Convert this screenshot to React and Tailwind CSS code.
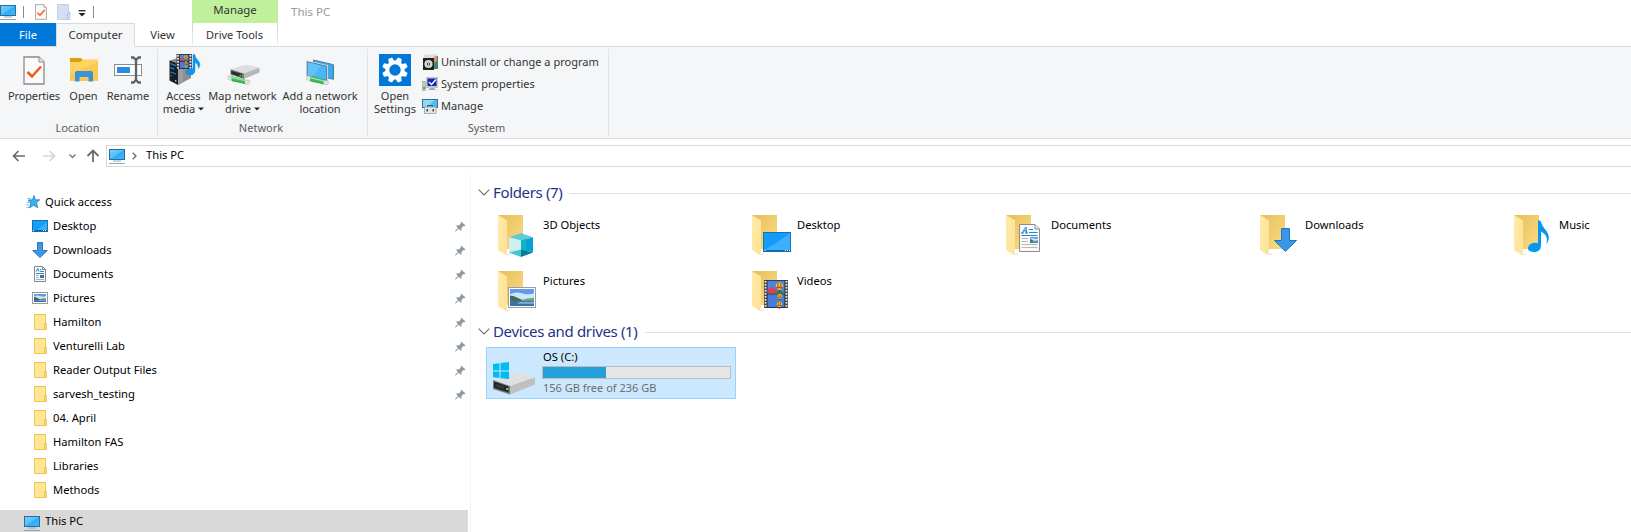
import React from "react";

function Monitor({ className = "" }) {
  return (
    <svg width="16" height="16" viewBox="0 0 16 16" className={"shrink-0 " + className}>
      <defs>
        <linearGradient id="mon" x1="0" y1="0" x2="1" y2="1">
          <stop offset="0" stopColor="#7fd0fb" />
          <stop offset="0.5" stopColor="#52bdfb" />
          <stop offset="0.52" stopColor="#2fabf8" />
          <stop offset="1" stopColor="#42b8fa" />
        </linearGradient>
      </defs>
      <rect x="0.5" y="1.5" width="15" height="10" fill="url(#mon)" stroke="#2c6f96" />
      <rect x="4" y="12.5" width="8" height="1" fill="#8fa9b8" />
      <rect x="0" y="15" width="16" height="1" fill="#93a7b4" />
    </svg>
  );
}

function CheckPage({ w, h }) {
  return (
    <svg width={w} height={h} viewBox="0 0 22 29" className="shrink-0">
      <path d="M1 1H16L21 6V28H1Z" fill="#fafafa" stroke="#8b8b8b" strokeWidth="1.3" />
      <path d="M16 1V6H21" fill="#e6e6e6" stroke="#8b8b8b" />
      <path d="M4.500 16L9 20.500L18 10.500" fill="none" stroke="#f0581c" strokeWidth="2.500" />
    </svg>
  );
}

function OpenFolder() {
  return (
    <svg width="32" height="32" viewBox="0 0 32 32">
      <path d="M2 4H13L15 6V10H2Z" fill="#dd9d10" />
      <path d="M2 8H12L15 5.500H30V27H2Z" fill="#ffd264" />
      <path d="M2 20L30 8V27H2Z" fill="#fcc850" />
      <path d="M7 27.500V18.500Q7 17 8.500 17H23.500Q25 17 25 18.500V27.500H20.500V23H11.500V27.500Z" fill="#3a94dc" />
    </svg>
  );
}

function RenameIcon() {
  return (
    <svg width="32" height="32" viewBox="0 0 32 32">
      <rect x="2.500" y="10.500" width="27" height="11" fill="#fff" stroke="#8a8d90" />
      <rect x="5" y="13" width="13" height="6" fill="#2b8be0" />
      <path d="M19 3.500H21.500L24 6L26.500 3.500H29M19 28.500H21.500L24 26L26.500 28.500H29M24 5V27" stroke="#5e6266" strokeWidth="2.300" fill="none" />
    </svg>
  );
}

function Balloon({ cx, cy, r }) {
  return (
    <g>
      <path d={`M${cx - r} ${cy}Q${cx - r} ${cy - r} ${cx} ${cy - r}T${cx + r} ${cy}Q${cx + r * 0.8} ${cy + r * 0.7} ${cx} ${cy + r * 1.3}Q${cx - r * 0.8} ${cy + r * 0.7} ${cx - r} ${cy}Z`} fill="#f3c81d" />
      <path d={`M${cx - r * 0.4} ${cy - r * 0.8}v${r * 1.5}M${cx + r * 0.4} ${cy - r * 0.8}v${r * 1.5}`} stroke="#6b2a1c" strokeWidth={r * 0.22} />
      <path d={`M${cx - r * 0.8} ${cy + r * 0.4}h${r * 1.6}`} stroke="#d33a2c" strokeWidth={r * 0.3} />
      <rect x={cx - r * 0.25} y={cy + r * 1.2} width={r * 0.5} height={r * 0.4} fill="#3b2618" />
    </g>
  );
}

function Film({ x, y, w, h }) {
  const holes = Array.from({ length: Math.floor(h / 3) }, (_, i) => y + 1 + i * 3);
  const half = (h - 1) / 2;
  const iw = w - 7;
  const ix = x + 3.5;
  return (
    <g>
      <rect x={x} y={y} width={w} height={h} fill="#4a4a4c" />
      {holes.map((hy) => (
        <g key={hy} fill="#f2f2f2">
          <rect x={x + 0.7} y={hy} width="1.7" height="1.6" />
          <rect x={x + w - 2.4} y={hy} width="1.7" height="1.6" />
        </g>
      ))}
      <rect x={x + 3} y={y} width={w - 6} height={h} fill="#202124" />
      <rect x={ix} y={y + 0.7} width={iw} height={half - 0.7} fill="#4d84e0" />
      <rect x={ix} y={y + half + 0.8} width={iw} height={half - 0.6} fill="#477bd8" />
      <path d={`M${ix} ${y + half}v${-half * 0.3}l${iw * 0.25} ${-half * 0.2}l${iw * 0.3} ${half * 0.2}v${half * 0.3}z`} fill="#dd4059" />
      <path d={`M${ix + iw * 0.45} ${y + half}v${-half * 0.15}h${iw * 0.55}v${half * 0.15}z`} fill="#2e8b46" />
      <Balloon cx={ix + iw * 0.7} cy={y + half * 0.45} r={half * 0.27} />
      <Balloon cx={ix + iw * 0.72} cy={y + half * 1.2} r={half * 0.18} />
      <Balloon cx={ix + iw * 0.7} cy={y + half * 1.8} r={half * 0.2} />
    </g>
  );
}

function AccessMedia() {
  return (
    <svg width="34" height="32" viewBox="0 0 34 32">
      <path d="M2.500 6.500L11 4L24 7L11 9.500Z" fill="#8b8e90" />
      <path d="M2.500 6.500L11 9.500V31L2.500 26.500Z" fill="#1b1e22" />
      <path d="M11 9.500L24 7V24L11 31Z" fill="#8b8e93" />
      <path d="M11 9.500L16 8.500V28.500L11 31Z" fill="#9b9ea2" />
      <g fill="#1391e8">
        <path d="M3.500 9l5.500 2v1.300l-5.500-2zM3.500 13l3.500 1.300v1.300l-3.500-1.300zM3.500 17.500l5.500 2v1l-5.500-2z" />
        <rect x="3.500" y="21" width="1.300" height="1.300" />
        <rect x="8" y="26" width="1.400" height="1.600" fill="#6bc9ff" />
      </g>
      <Film x={9.5} y={0} w={15.5} h={15} />
      <path d="M26 0.500H27.800Q28.300 4 31 6.500Q34.500 10 31.500 14.500Q31.500 10 28 8.500V16.500Q27.500 21 23 21Q18.800 20.500 19 17.800Q20 14.200 26 14.500Z" fill="#0b98f2" stroke="#087ccb" strokeWidth="0.400" />
    </svg>
  );
}

function NetPipe() {
  return (
    <g>
      <path d="M2 21.500L6.500 22V26.500L2 25.500Z" fill="#dfe4e2" stroke="#b4bab8" strokeWidth=".5" />
      <path d="M17.500 26L23.500 26.500Q25 29 22.500 30.500L17.500 29.500Z" fill="#dfe4e2" stroke="#a9afad" strokeWidth=".5" />
      <path d="M5.500 22L19 25.500V29.500L5.500 26.800Z" fill="#3cc055" />
      <path d="M5.500 22.500L19 26V27.300L5.500 24Z" fill="#90e69a" />
      <path d="M6 26.800L19 29.500" stroke="#1f8a38" strokeWidth=".7" />
    </g>
  );
}

function MapDrive() {
  return (
    <svg width="34" height="32" viewBox="0 0 34 32">
      <NetPipe />
      <path d="M4.500 15.300L19.500 10.800L33.500 13.500L18 19.500Z" fill="#dcdddf" />
      <path d="M4.500 15.300L18 19.500V25L4.500 20.500Z" fill="#77797b" />
      <path d="M18 19.500L33.500 13.500V18.500L18 25Z" fill="#b5b7b9" />
      <path d="M5.300 16.700L16 20V23.500L5.300 20Z" fill="#2a2c2e" />
      <rect x="13.500" y="21" width="1.800" height="1.300" fill="#5bea63" />
    </svg>
  );
}

function AddLocation() {
  return (
    <svg width="32" height="32" viewBox="0 0 32 32">
      <path d="M9.500 6L29.500 10.700V25.300L9.500 20.500Z" fill="#3aa9ee" stroke="#4a6f86" strokeWidth="0.900" />
      <path d="M3 7.500L23 12V27L3 21.500Z" fill="#44b3f6" stroke="#dfe9ee" strokeWidth="2" />
      <path d="M3.200 7.700L22.700 12.200V26.700L3.200 21.300Z" fill="#49b5f6" stroke="#45657a" strokeWidth="0.800" />
      <path d="M3.700 8.300L17 11.500L9 22.500L3.700 21Z" fill="#72c8fa" opacity=".65" />
      <g transform="translate(0.500 0.300)"><NetPipe /></g>
    </svg>
  );
}

function SettingsIcon() {
  return (
    <svg width="32" height="32" viewBox="0 0 32 32">
      <rect width="32" height="32" fill="#0078d7" />
      <g transform="translate(16 16) rotate(22.500)">
        <circle r="7.600" fill="none" stroke="#fff" strokeWidth="3.800" />
        {[0, 45, 90, 135, 180, 225, 270, 315].map((a) => (
          <path key={a} transform={`rotate(${a})`} d="M-3 -8.500L-2 -12.800H2L3 -8.500Z" fill="#fff" />
        ))}
      </g>
    </svg>
  );
}

function UninstallIcon() {
  return (
    <svg width="16" height="16" viewBox="0 0 16 16">
      <path d="M2 1L15 0V5H2Z" fill="#dcdedc" />
      <path d="M12 3L16 2V15H12Z" fill="#3f8a68" />
      <path d="M12 3L15 2V7L12 9Z" fill="#df9363" />
      <path d="M1 4H12V16H1Z" fill="#202120" />
      <circle cx="6.500" cy="10" r="4.100" fill="#d3d6d3" />
      <circle cx="6.500" cy="10" r="1.500" fill="#3a3c3a" />
      <circle cx="6.500" cy="10" r=".7" fill="#fff" />
    </svg>
  );
}

function SysPropsIcon() {
  return (
    <svg width="16" height="16" viewBox="0 0 16 16">
      <rect x="0.500" y="5.500" width="3" height="9" fill="#c6c9c6" stroke="#949894" strokeWidth=".6" />
      <rect x="1" y="11" width="2" height="2" fill="#2fc440" />
      <path d="M4 1H16V12H4Z" fill="#c4c7c7" />
      <rect x="5.500" y="2.500" width="9" height="7.500" fill="#1425b4" />
      <path d="M7 6L9.500 8.500L14 3.500" stroke="#fff" strokeWidth="1.400" fill="none" />
      <path d="M8 12H12L14 14H6Z" fill="#a8abab" />
    </svg>
  );
}

function ManageIcon() {
  return (
    <svg width="16" height="16" viewBox="0 0 16 16">
      <rect x="0.500" y="1.500" width="15" height="8" fill="#50bcf5" stroke="#2f7199" />
      <path d="M1 2H12L6 9H1Z" fill="#8ed6fa" />
      <path d="M5.500 9V7.500H10.500V9" stroke="#555" fill="none" />
      <rect x="2.500" y="9" width="11.500" height="6.500" fill="#e3e6e8" stroke="#8e9499" strokeWidth=".7" />
      <rect x="4.500" y="11" width="1.500" height="2.500" fill="#444" />
      <rect x="10.500" y="11" width="1.500" height="2.500" fill="#444" />
    </svg>
  );
}

function BaseFolder({ children }) {
  return (
    <svg width="42" height="44" viewBox="0 0 42 44" className="shrink-0">
      <defs>
        <linearGradient id="fb" x1="0" y1="0" x2="1" y2="1">
          <stop offset="0" stopColor="#e6bf5c" />
          <stop offset="1" stopColor="#fbdc83" />
        </linearGradient>
        <linearGradient id="ff" x1="0" y1="0" x2="1" y2="0.600">
          <stop offset="0" stopColor="#ffeca8" />
          <stop offset="1" stopColor="#fee299" />
        </linearGradient>
      </defs>
      <path d="M8 40L12 38L11 40Z" fill="#ddd" />
      <path d="M0 0H25V34H0Z" fill="url(#fb)" />
      <path d="M0 0L9 5.500V35L8.200 40.300L0 35Z" fill="url(#ff)" />
      {children}
    </svg>
  );
}

const Landscape = ({ x, y, w, h }) => (
  <svg x={x} y={y} width={w} height={h} viewBox="0 0 24 16" preserveAspectRatio="none">
    <rect width="24" height="16" fill="#5f9bea" />
    <path d="M0 5Q6 2 12 4T24 4V12H0Z" fill="#cfe5f8" />
    <path d="M0 6Q4 6 8 8.500T18 11L24 12H0Z" fill="#3f6f50" />
    <path d="M11 10.500Q17 8.500 24 8.500V12H13Z" fill="#6f9a90" />
    <path d="M0 11.500H24V16H0Z" fill="#3f72a4" />
    <path d="M10 12.300H24V13.800H7Z" fill="#86b1d0" />
  </svg>
);

const overlays = {
  "3D Objects": (
    <g>
      <path d="M23 18L35 22.300L23 25.500L11 22.300Z" fill="#5fcbd6" />
      <path d="M11 22.300L23 25.500V34.500L11 37.500Z" fill="#cdf1f3" />
      <path d="M23 25.500L35 22.300V37.500L23 34.500Z" fill="#06a2d6" />
      <path d="M23 25.500L28 24V35.700L23 34.500Z" fill="#10b5c5" />
      <path d="M11 37.500L23 34.500V42Z" fill="#3ec6d2" />
      <path d="M23 34.500L35 37.500L23 42Z" fill="#067b93" />
    </g>
  ),
  Desktop: (
    <g>
      <rect x="11.500" y="17.500" width="27" height="19" fill="#159cfb" stroke="#1173b4" />
      <path d="M12 35L23 29L38 18V35Z" fill="#3db0fd" />
      <rect x="12" y="35" width="26" height="1.500" fill="#0b6db3" />
      <path d="M12.500 35.500h1M33 35.500h1M35 35.500h1M37 35.500h1" stroke="#fff" />
    </g>
  ),
  Documents: (
    <g>
      <path d="M13.500 9.500H29L33.500 14V36.500H13.500Z" fill="#fafafa" stroke="#8a8d8f" />
      <path d="M29 9.500V14H33.500" fill="#e4e4e4" stroke="#8a8d8f" />
      <path d="M16 18L20 12L20.500 18M17.500 16H20.500M15 18h3M19 18h3" stroke="#1780c7" fill="none" />
      <path d="M23 14.500H27M23 17.500H31.500M15.500 20.500H31.500" stroke="#1e8ad2" />
      <path d="M15.500 23.500H22M15.500 26.500H22M15.500 29.500H31.500M15.500 32.500H31.500" stroke="#b4b6b8" />
      <Landscape x={24} y={22} w={8} h={6} />
    </g>
  ),
  Downloads: <path d="M21.500 13.500H29.500V25.500H36.500L25.300 36.500L14.500 25.500H21.500Z" fill="#3997e8" stroke="#2474b9" />,
  Music: (
    <path d="M24 5.500Q26 4.500 27 7Q28 11 32.500 16Q37 22.500 33 28.500Q32 28 32.700 27Q34 20 27 16.500V31Q26.500 37 19.500 37Q13.500 36.500 14 32.500Q15.500 27.500 22 27.800L24 28.200Z" fill="#0497f3" />
  ),
  Pictures: (
    <g>
      <rect x="10.500" y="16.500" width="27" height="20" fill="#fff" stroke="#9a9c9e" />
      <Landscape x={12} y={18} w={24} h={17} />
    </g>
  ),
  Videos: <Film x={12} y={9} w={24} h={28} />,
};

function Star() {
  return (
    <svg width="16" height="16" viewBox="0 0 16 16" className="shrink-0">
      <path d="M8 1.500L9.300 5.800H13.800L10.500 8.800L11.800 13.800L7.500 11.200L3.500 14L4.700 9L2 6L6.500 5.800Z" fill="#36b3f2" stroke="#1d76ac" strokeWidth=".7" />
      <path d="M1.500 4.500H5M0.500 8.500H3.500M0 11H3M0.500 13.500H3.500" stroke="#6cbce8" strokeWidth=".9" />
    </svg>
  );
}

function SmallFolder() {
  return (
    <svg width="16" height="16" viewBox="0 0 16 16">
      <path d="M2.500 0.500H13.500V15.500H2.500Z" fill="#ffe596" stroke="#ecc64e" />
      <path d="M12.500 9.500H14.500V15.500H12.500Z" fill="#fcdc7c" stroke="#e7bd43" strokeWidth=".8" />
    </svg>
  );
}

const smallIcons = {
  Desktop: (
    <svg width="16" height="16" viewBox="0 0 16 16">
      <rect x="0.500" y="2.500" width="15" height="11" fill="#159dfb" stroke="#1474ad" />
      <path d="M5 12L15 4V12Z" fill="#39aefd" />
      <path d="M1 12.500H15" stroke="#0b5f9b" />
      <path d="M1 12.500h1M11 12.500h1M13 12.500h1" stroke="#fff" />
    </svg>
  ),
  Downloads: (
    <svg width="16" height="16" viewBox="0 0 16 16">
      <path d="M5.500 0.500H10.500V8.500H15.300L8 15.500L0.700 8.500H5.500Z" fill="#3c9ae9" stroke="#2a76b8" />
    </svg>
  ),
  Documents: (
    <svg width="16" height="16" viewBox="0 0 16 16">
      <path d="M2.500 0.500H10.500L13.500 3.500V15.500H2.500Z" fill="#fafafa" stroke="#85888b" />
      <path d="M10.500 0.500V3.500H13.500" fill="none" stroke="#85888b" />
      <path d="M4 5.500L6 2.500L7 5.500M8 3.500H9.500M8 5.500H12M4 7.500H12" stroke="#2588c9" fill="none" />
      <path d="M4 9.500H7M4 11.500H7M4 13.500H12" stroke="#9eb5c5" />
      <rect x="8" y="9" width="4" height="3" fill="#3977a5" />
    </svg>
  ),
  Pictures: (
    <svg width="16" height="16" viewBox="0 0 16 16">
      <rect x="0.500" y="2.500" width="15" height="11" fill="#fff" stroke="#97999b" />
      <Landscape x={2} y={4} w={12} h={8} />
    </svg>
  ),
};

function Pin() {
  return (
    <svg width="11" height="11" viewBox="0 0 11 11">
      <path d="M6 0.500L10.500 4.500L9.500 5.200L8.700 4.900L6.500 7L6.600 9L5.700 9.800L3.600 7.700L0.800 10.400L0.200 10.200L0.300 9.600L2.900 7L1 5L1.900 4.300L4 4.400L6 2.300L5.500 1.200Z" fill="#8d9aa3" />
    </svg>
  );
}

function DriveIcon() {
  return (
    <svg width="44" height="34" viewBox="0 0 44 34" className="shrink-0">
      <path d="M1 18L26 10.500L43 15.500L18 24.500Z" fill="#dfe0e2" />
      <path d="M1 18L18 24V32.500L1 27Z" fill="#77797b" />
      <path d="M18 24L43 15.500V22.500L18 32.500Z" fill="#bdbfc1" />
      <path d="M2 19.500L16.500 24.500V30.500L2 25.800Z" fill="#232527" />
      <path d="M4 22L12 24.500V27L4 24.500Z" fill="#393c3e" />
      <rect x="14" y="26" width="2.300" height="2" fill="#42e04d" />
      <path d="M1 2L7.500 1.200V8.500H1ZM8.500 1.100L17 0V8.500H8.500ZM1 9.500H7.500V16L1 15.200ZM8.500 9.500H17V17L8.500 16.200Z" fill="#00bcf2" />
    </svg>
  );
}

const Caret = () => (
  <svg width="6" height="4" viewBox="0 0 6 4" className="mb-[2px] ml-[3px] inline-block">
    <path d="M0 0.500H6L3 3.500Z" fill="#222" />
  </svg>
);

function BigButton({ icon, lines, caret, className }) {
  return (
    <div className={"flex shrink-0 flex-col items-center " + className}>
      <div className="flex h-8 justify-center">{icon}</div>
      <div className="mt-[3px] text-center leading-[13px] whitespace-nowrap">
        {lines.map((l, i) => (
          <div key={l}>
            {l}
            {caret && i === 1 && <Caret />}
          </div>
        ))}
      </div>
    </div>
  );
}

function Group({ name, className, children }) {
  return (
    <div className={"flex h-[87px] shrink-0 flex-col border-r border-[#e2e3e4] " + className}>
      <div className="flex h-[72px] pt-[5px]">{children}</div>
      <div className="pr-[6px] text-center leading-[16px] text-[#5a5c5e]">{name}</div>
    </div>
  );
}

function SectionHeader({ title, className }) {
  return (
    <div className={"flex h-6 items-center " + className}>
      <svg width="12" height="7" viewBox="0 0 12 7" className="shrink-0">
        <path d="M0.700 0.700L6 6L11.300 0.700" fill="none" stroke="#6f6f6f" strokeWidth="1.100" />
      </svg>
      <span className="ml-[3px] shrink-0 text-[15px] tracking-[-0.350px] whitespace-nowrap text-[#1e3287]">{title}</span>
      <span className="mt-[3px] ml-[7px] h-px flex-1 bg-[#e2e2e2]" />
    </div>
  );
}

const places = [
  ["Desktop", true],
  ["Downloads", true],
  ["Documents", true],
  ["Pictures", true],
  ["Hamilton", true],
  ["Venturelli Lab", true],
  ["Reader Output Files", true],
  ["sarvesh_testing", true],
  ["04. April", false],
  ["Hamilton FAS", false],
  ["Libraries", false],
  ["Methods", false],
];

const folders = ["3D Objects", "Desktop", "Documents", "Downloads", "Music", "Pictures", "Videos"];

export default function App() {
  return (
    <div className="flex h-[532px] w-[1631px] flex-col overflow-hidden bg-white font-['Noto_Sans',sans-serif] text-[11.200px] text-black">
      <header className="flex h-[46px] shrink-0">
        <div className="flex w-[192px] flex-col">
          <div className="flex h-[23px] items-center">
            <Monitor className="mt-px" />
            <span className="ml-[7px] h-3 w-px bg-[#8c8c8c]" />
            <span className="ml-[11px] flex"><CheckPage w={12} h={16} /></span>
            <svg width="14" height="16" viewBox="0 0 14 16" className="ml-[10px]">
              <path d="M0.500 0.500H11.500V8H13V15.500H0.500Z" fill="#d3e0f3" stroke="#c3d1e5" />
              <path d="M10.500 15V9.500H13" fill="none" stroke="#afc0d8" />
            </svg>
            <svg width="8" height="7" viewBox="0 0 8 7" className="mt-[4px] ml-[7px]">
              <path d="M0.500 0.750H7.500" stroke="#222" strokeWidth="1.300" />
              <path d="M0.500 3H7.500L4 6.500Z" fill="#222" />
            </svg>
            <span className="ml-[7px] h-3 w-px bg-[#8c8c8c]" />
          </div>
          <div className="flex h-[23px] text-center leading-[23px]">
            <div className="w-[56px] bg-[#0078d7] text-white">File</div>
            <div className="z-10 h-[24px] w-[79px] border border-b-0 border-[#dadbdc] bg-[#f5f6f7] text-[11.400px] leading-[21px] text-[#333]">Computer</div>
            <div className="flex-1 pr-[2px] text-[#333]">View</div>
          </div>
        </div>
        <div className="w-[86px] text-center text-[11.400px] text-[#333]">
          <div className="h-[23px] bg-[#c1f09c] leading-[20px]">Manage</div>
          <div className="flex h-[23px] text-[11px] leading-[23px]">
            <span className="w-px bg-linear-to-b from-[#cfcfcf] to-[#f2f2f2]" />
            <span className="flex-1 pr-px">Drive Tools</span>
            <span className="w-px bg-linear-to-b from-[#cfcfcf] to-[#f2f2f2]" />
          </div>
        </div>
        <div className="ml-[13px] text-[11.500px] leading-[23px] text-[#999]">This PC</div>
      </header>

      <section className="flex h-[93px] shrink-0 border-y border-[#dadbdc] bg-[#f5f6f7] pt-[2px] text-[11px] text-[#333]">
        <Group name="Location" className="w-[158px] pl-[4px]">
          <BigButton className="w-[60px] tracking-[-0.150px]" icon={<span className="pt-[2px]"><CheckPage w={22} h={29} /></span>} lines={["Properties"]} />
          <BigButton className="w-[39px]" icon={<OpenFolder />} lines={["Open"]} />
          <BigButton className="w-[50px]" icon={<RenameIcon />} lines={["Rename"]} />
        </Group>
        <Group name="Network" className="w-[210px] pl-[3px]">
          <BigButton className="w-[45px]" icon={<AccessMedia />} lines={["Access", "media"]} caret />
          <BigButton className="w-[73px]" icon={<MapDrive />} lines={["Map network", "drive"]} caret />
          <BigButton className="w-[82px]" icon={<AddLocation />} lines={["Add a network", "location"]} />
        </Group>
        <Group name="System" className="w-[241px] pl-[3px]">
          <BigButton className="w-[48px]" icon={<SettingsIcon />} lines={["Open", "Settings"]} />
          <div className="-mt-px ml-[3px] flex flex-col whitespace-nowrap">
            <div className="flex h-[18px] items-center gap-[3px]"><UninstallIcon />Uninstall or change a program</div>
            <div className="mt-[4px] flex h-[18px] items-center gap-[3px]"><SysPropsIcon />System properties</div>
            <div className="mt-[4px] flex h-[18px] items-center gap-[3px]"><ManageIcon />Manage</div>
          </div>
        </Group>
      </section>

      <nav className="mt-[6px] flex h-[22px] shrink-0 items-center">
        <svg width="106" height="22" viewBox="0 0 106 22" fill="none" className="shrink-0">
          <path d="M25 11H14M18.500 6L13.500 11L18.500 16" stroke="#6a6a6a" strokeWidth="1.700" />
          <path d="M43 11H54M49.500 6L54.500 11L49.500 16" stroke="#d5d5d5" strokeWidth="1.700" />
          <path d="M69.500 9.500L72.500 12.500L75.500 9.500" stroke="#7a7a7a" strokeWidth="1.500" />
          <path d="M93 17V6M87.500 11L93 5.500L98.500 11" stroke="#6a6a6a" strokeWidth="1.800" />
        </svg>
        <div className="flex h-[22px] flex-1 items-center border border-r-0 border-[#d9d9d9] pl-[2px]">
          <Monitor />
          <svg width="5" height="8" viewBox="0 0 5 8" className="ml-[7px]">
            <path d="M0.700 0.700L4 4L0.700 7.300" fill="none" stroke="#666" strokeWidth="1.300" />
          </svg>
          <span className="-mt-px ml-[9px]">This PC</span>
        </div>
      </nav>

      <main className="flex min-h-0 flex-1">
        <aside className="w-[468px] shrink-0 pt-[23px]">
          <div className="flex h-[24px] items-center pl-[26px]">
            <Star />
            <span className="ml-[3px]">Quick access</span>
          </div>
          {places.map(([name, pinned]) => (
            <div key={name} className="flex h-[24px] items-center pr-[2px] pl-[32px]">
              {smallIcons[name] || <SmallFolder />}
              <span className="ml-[5px] flex-1">{name}</span>
              {pinned && <Pin />}
            </div>
          ))}
          <div className="mt-[8px] flex h-[23px] items-center bg-[#d9d9d9] pl-[24px]">
            <Monitor className="mt-[2px]" />
            <span className="ml-[5px]">This PC</span>
          </div>
        </aside>
        <div className="mt-[7px] ml-[2px] min-w-0 flex-1 border-l border-[#f3f3f3] pl-[7px]">
          <SectionHeader title="Folders (7)" className="mt-[6px]" />
          <div className="mt-[11px] grid grid-cols-[repeat(5,254px)] pl-[20px]">
            {folders.map((name) => (
              <div key={name} className="flex h-[56px]">
                <BaseFolder>{overlays[name]}</BaseFolder>
                <span className="ml-[3px] leading-[19px]">{name}</span>
              </div>
            ))}
          </div>
          <SectionHeader title="Devices and drives (1)" className="-mt-[8px]" />
          <div className="mt-[4px] ml-[8px] flex h-[52px] w-[250px] border border-[#99d1ff] bg-[#cce8ff] pl-[5px]">
            <div className="pt-[14px]"><DriveIcon /></div>
            <div className="ml-[6px] w-[189px]">
              <div className="h-[18px] pl-px leading-[17px]">OS (C:)</div>
              <div className="h-[13px] border border-[#bcbcbc] bg-[#e6e6e6]">
                <div className="h-full w-[63px] bg-[#26a0da]" />
              </div>
              <div className="pl-px text-[11px] leading-[18px] text-[#6d6d6d]">156 GB free of 236 GB</div>
            </div>
          </div>
        </div>
      </main>
    </div>
  );
}
